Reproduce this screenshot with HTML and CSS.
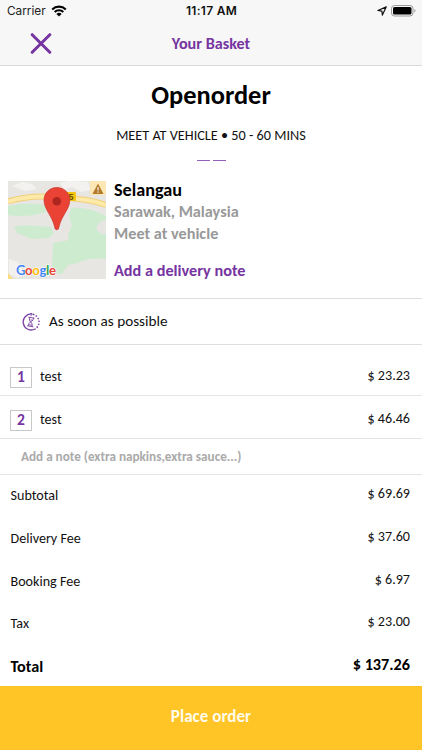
FILE: index.html
```html
<!DOCTYPE html>
<html lang="en">
<head>
<meta charset="utf-8">
<title>Your Basket</title>
<link rel="stylesheet" href="styles.css">
</head>
<body>
<header class="top">
  <div class="status">
    <div class="carrier"><span>Carrier</span>
      <svg width="16" height="12" viewBox="0 0 16 12"><g fill="none" stroke="#000" stroke-width="2.1"><path d="M1.2 4.400a9.700 9.700 0 0 1 13.600 0"/><path d="M3.700 7a6.100 6.100 0 0 1 8.600 0"/></g><path d="M8 11.600 5.400 9a3.700 3.700 0 0 1 5.200 0z"/></svg>
    </div>
    <div class="clock">11:17 AM</div>
    <div class="power">
      <svg width="10" height="10" viewBox="0 0 10 10"><path d="M9.200.9 .9 4.500l4 .6.500 4z" fill="none" stroke="#111" stroke-width="1.200" stroke-linejoin="round"/></svg>
      <svg width="25" height="12" viewBox="0 0 25 12"><rect x=".5" y=".5" width="21.500" height="10.500" rx="3" fill="none" stroke="#999"/><rect x="2" y="2" width="18.500" height="7.500" rx="1.600"/><path d="M23.300 4v3.600q1.200-.5 1.200-1.800T23.300 4z" fill="#999"/></svg>
    </div>
  </div>
  <nav class="nav">
    <svg class="close" width="22" height="22" viewBox="0 0 22 22"><path d="M2.200 1.700 19.800 19.300M19.800 1.700 2.200 19.300" stroke="#7634a0" stroke-width="3" stroke-linecap="round"/></svg>
    <h2 class="nav-title">Your Basket</h2>
  </nav>
</header>
<section class="hero">
  <h1 class="shop">Openorder</h1>
  <p class="eta">MEET AT VEHICLE • 50 - 60 MINS</p>
  <div class="dashes"><i></i><i></i></div>
</section>
<section class="place">
  <svg class="map" width="98" height="98" viewBox="0 0 98 98">
    <rect width="98" height="98" fill="#e8e6e2"/>
    <path d="M4 5 14 1l10 2 5 5-12 2zM52 2l8-2 20 1 2 8-9 2-9-5-8 3z" fill="#f3f2f0"/>
    <path d="M0 25q18-4 36-1l2 7q-18 6-38 3z" fill="#ccebcf"/>
    <path d="M63 27q17-2 35 8v43q-18-2-28 4l-10 2-6 9-10-1 1-30 16-3-1-5 4-10-3-8z" fill="#ccebcf"/>
    <path d="M6 46q9-3 22-1l15 1 3 7-6 4-16 1-15-6z" fill="#ccebcf"/>
    <path d="M88 47q3-8 10-8v14q-6 2-10-6z" fill="#e7e5e1"/>
    <path d="M1 78l9 3 7 11-7 5-9-4z" fill="#f2f1ef"/>
    <path d="M0 20.500Q18 15 38 15.500T70 18Q84 19 98 24" fill="none" stroke="#f1cf7a" stroke-width="6"/>
    <path d="M0 20.500Q18 15 38 15.500T70 18Q84 19 98 24" fill="none" stroke="#fde9a8" stroke-width="4"/>
    <path d="M0 92l5 6H0z" fill="#fbdc83"/>
    <rect x="54" y="11" width="14" height="9" rx="1" fill="#f6c514"/>
    <text x="60.500" y="18.600" class="road">5</text>
    <rect x="82" width="16" height="14" fill="#fbe7b4"/>
    <path d="M90 3.500 94.800 12.500H85.200z" fill="#b47b2c" stroke="#b47b2c" stroke-linejoin="round"/><path d="M90 6v3.500M90 10.500v1.300" stroke="#fff" stroke-width="1.100"/>
    <path d="M48.800 6.500c7.500 0 13 5.600 13 12.800 0 8.800-8.600 16-10.800 26.500q-.2 3-2.200 3t-2.200-3C44.400 35.300 36 28.100 36 19.300 36 12.100 41.300 6.500 48.800 6.500z" fill="#ea4335" stroke="#c5362c" stroke-width=".7"/>
    <circle cx="48.800" cy="20.200" r="4.300" fill="#ad261f"/>
    <text x="8" y="93.500" class="google" textLength="40"><tspan fill="#4285f4">G</tspan><tspan fill="#ea4335">o</tspan><tspan fill="#fbbc05">o</tspan><tspan fill="#4285f4">g</tspan><tspan fill="#34a853">l</tspan><tspan fill="#ea4335">e</tspan></text>
  </svg>
  <div class="address">
    <h3 class="town">Selangau</h3>
    <p class="line">Sarawak, Malaysia</p>
    <p class="line">Meet at vehicle</p>
    <a class="add">Add a delivery note</a>
  </div>
</section>
<section class="when">
  <svg width="18" height="18" viewBox="0 0 18 18" fill="none" stroke="#7c3fa6"><path d="M9.800 1A8 8 0 1 0 13 16" stroke-width="1.300"/><path d="M11 1.300A8 8 0 0 1 13 16" stroke-width="1.500" stroke-dasharray="1.500 1.500"/><path d="M8 0l2.500 1.200L8.500 3" stroke-width=".9"/><path d="M6.800 4.200l5.400 1M5.600 12.800l5.400 1M7.500 4.400c-.4 2.600.2 3.500 1.100 4.600-1.600.8-2.300 1.900-2.300 3.800M11.500 5.200c-.3 2.300-1.300 3.200-2.900 3.800 1.500 1.200 1.800 2.500 1.600 4.500M7.500 11.800l2 .4M8.800 7l1.500.2" stroke-width=".9" stroke-linecap="round"/></svg>
  <span class="when-text">As soon as possible</span>
</section>
<section class="items">
  <div class="item"><b class="qty">1</b><span class="name">test</span><span class="price">$ 23.23</span></div>
  <div class="item"><b class="qty">2</b><span class="name">test</span><span class="price">$ 46.46</span></div>
  <div class="note">Add a note (extra napkins,extra sauce...)</div>
</section>
<section class="sums">
  <div class="row"><span>Subtotal</span><span class="price">$ 69.69</span></div>
  <div class="row"><span>Delivery Fee</span><span class="price">$ 37.60</span></div>
  <div class="row"><span>Booking Fee</span><span class="price">$ 6.97</span></div>
  <div class="row"><span>Tax</span><span class="price">$ 23.00</span></div>
  <div class="row total"><span>Total</span><span class="price">$ 137.26</span></div>
</section>
<button class="order">Place order</button>
</body>
</html>
```
FILE: styles.css
```css
* { box-sizing: border-box; margin: 0; padding: 0; }
body { width: 422px; height: 750px; overflow: hidden; display: flex; flex-direction: column; background: #fff; color: #111; font: 14.1px/20px Carlito, Calibri, Lato, sans-serif; }
svg { display: block; flex: none; }
.top { height: 66px; background: #f7f7f7; border-bottom: 1px solid #d9d9d9; }
.status { height: 22px; display: grid; grid-template-columns: 1fr auto 1fr; align-items: center; padding: 0 6px 0 7px; font: 11.8px/22px Inter, sans-serif; }
.carrier { display: flex; align-items: center; gap: 5px; color: #222; }
.clock { font-weight: 600; font-size: 12px; letter-spacing: .3px; color: #111; }
.power { display: flex; justify-content: flex-end; align-items: center; gap: 4px; }
.nav { height: 43px; display: grid; grid-template-columns: 1fr auto 1fr; align-items: center; }
.close { margin-left: 30px; }
.nav-title { font-size: 16.2px; line-height: 20px; color: #7634a0; }
.hero { height: 115px; display: flex; flex-direction: column; align-items: center; padding-top: 13px; }
.shop { font-size: 26.4px; line-height: 32px; color: #000; }
.eta { font-size: 14.25px; line-height: 20px; margin-top: 14px; }
.dashes { display: flex; gap: 3px; margin-top: 15px; }
.dashes i { width: 13px; height: 1px; background: #955fb8; }
.place { height: 117px; display: flex; gap: 8px; padding-left: 8px; }
.road { font: 700 9px "Liberation Sans", sans-serif; fill: #6b5300; }
.google { font: 700 13.2px Lato, sans-serif; stroke: #fff; stroke-width: 1px; paint-order: stroke; }
.address { display: flex; flex-direction: column; font-weight: 700; font-size: 16.25px; line-height: 22px; }
.town { font-size: 18.2px; line-height: 18px; margin-bottom: 2px; color: #000; }
.line { color: #999; }
.add { color: #7634a0; margin-top: 15px; }
.when { height: 47px; display: flex; align-items: center; gap: 9px; padding-left: 22px; border-top: 1px solid #dedede; border-bottom: 1px solid #dedede; font-size: 15.2px; }
.when-text { margin-top: -2px; }
.item { height: 43px; display: flex; align-items: center; padding: 7px 12px 0 10px; border-bottom: 1px solid #e5e5e5; }
.item:first-child { height: 51px; padding-top: 15px; }
.qty { width: 22px; height: 21px; border: 1px solid #c8c8c8; color: #7634a0; font-size: 15.5px; line-height: 18px; text-align: center; margin-right: 8px; }
.name { margin-top: -1px; }
.price { margin-left: auto; margin-top: -4px; }
.note { height: 36px; padding: 7.500px 0 0 21px; border-bottom: 1px solid #e5e5e5; color: #aaa; font-weight: 700; font-size: 13.2px; line-height: 20px; }
.sums { height: 210.5px; }
.row { height: 42.7px; display: flex; align-items: center; padding: 0 12px 0 10.5px; }
.total { font-weight: 700; font-size: 16.2px; color: #000; margin-top: -.5px; }
.order { flex: 1; border: 0; padding-bottom: 2px; background: #ffc425; color: #fffbe8; font: 700 17.1px/20px Carlito, Calibri, Lato, sans-serif; }
```
